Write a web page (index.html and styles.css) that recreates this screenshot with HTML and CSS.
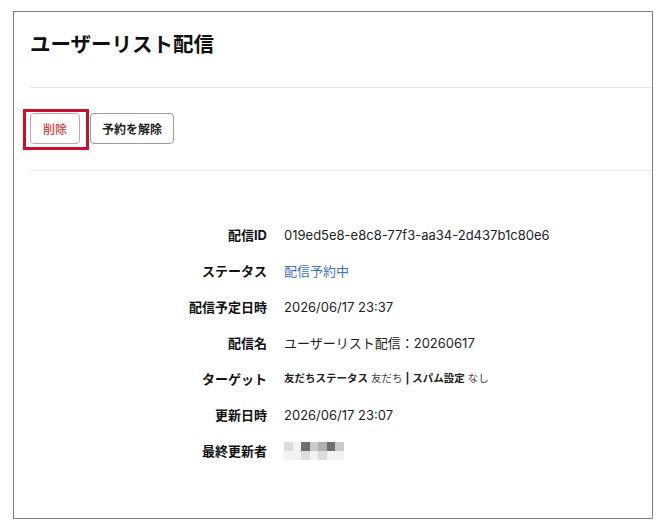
FILE: index.html
```html
<!DOCTYPE html>
<html lang="ja">
<head>
    <meta charset="UTF-8">
    <meta name="viewport" content="width=device-width, initial-scale=1.0">
    <title>ユーザーリスト配信</title>
    <link rel="stylesheet" href="styles.css">
</head>
<body>
    <div class="page">
        <header class="page-header">
            <h1>ユーザーリスト配信</h1>
        </header>
        <div class="divider"></div>

        <div class="actions">
            <span class="highlight">
                <button class="btn btn-danger">削除</button>
            </span>
            <button class="btn">予約を解除</button>
        </div>
        <div class="divider"></div>

        <dl class="details">
            <dt>配信ID</dt>
            <dd>019ed5e8-e8c8-77f3-aa34-2d437b1c80e6</dd>

            <dt>ステータス</dt>
            <dd class="status">配信予約中</dd>

            <dt>配信予定日時</dt>
            <dd>2026/06/17 23:37</dd>

            <dt>配信名</dt>
            <dd>ユーザーリスト配信：20260617</dd>

            <dt>ターゲット</dt>
            <dd class="target"><b>友だちステータス</b> 友だち <b>|</b> <b>スパム設定</b> なし</dd>

            <dt>更新日時</dt>
            <dd>2026/06/17 23:07</dd>

            <dt>最終更新者</dt>
            <dd class="user">
                <!-- name is blurred in the capture -->
                <span class="mosaic">
                    <span class="m1"></span><span class="m0"></span><span class="m4"></span><span class="m2"></span><span class="m3"></span><span class="m4"></span><span class="m2"></span>
                    <span class="m0"></span><span class="m0"></span><span class="m1"></span><span class="m0"></span><span class="m1"></span><span class="m0"></span><span class="m0"></span>
                </span>
            </dd>
        </dl>
    </div>
</body>
</html>
```

FILE: styles.css
```css
body {
    margin: 0;
    background-color: #FFFFFF;
    color: #222222;
    font-family: Inter, "Noto Sans CJK JP", sans-serif;
}

.page {
    margin: 11px 0 0 13px;
    width: 638px;
    height: 506px;
    border: 1px solid #808080;
}

.page-header {
    padding: 19px 16px 28px;
}

.page-header h1 {
    margin: 0;
    font-size: 20.5px;
    line-height: 28px;
    font-weight: 700;
    color: #111111;
}

.divider {
    height: 1px;
    margin-left: 16px;
    background-color: #E6E6E6;
}

.actions {
    display: flex;
    gap: 10px;
    padding: 25px 16px 26px;
}

.btn {
    height: 31px;
    padding: 0 11px;
    border: 1px solid #9A9A9A;
    border-radius: 4px;
    background-color: #FFFFFF;
    color: #222222;
    font-family: inherit;
    font-size: 12px;
    font-weight: 700;
    cursor: pointer;
}

.btn-danger {
    padding: 0 12px;
    border-color: #C9A3A3;
    color: #D2423F;
    font-weight: 500;
}

/* red annotation box round the delete button */
.highlight {
    position: relative;
    display: inline-flex;
}

.highlight::after {
    content: "";
    position: absolute;
    top: -4px;
    left: -7px;
    right: -9px;
    bottom: -6px;
    border: 3px solid #C8102E;
    pointer-events: none;
}

.details {
    display: grid;
    grid-template-columns: 253px 1fr;
    column-gap: 17px;
    row-gap: 16px;
    margin: 0;
    padding-top: 54px;
    font-size: 13px;
    line-height: 20px;
}

.details dt {
    text-align: right;
    font-weight: 700;
    color: #111111;
}

.details dd {
    margin: 0;
}

.status {
    color: #3B73C6;
}

.details .target {
    font-size: 10.5px;
    color: #444444;
}

.target b {
    color: #222222;
}

.details .user {
    display: flex;
    align-items: center;
}

.mosaic {
    display: grid;
    grid-template-columns: repeat(7, 8.5px);
    grid-auto-rows: 9px;
}

.m0 { background-color: #F2F2F2; }
.m1 { background-color: #DCDCDC; }
.m2 { background-color: #CACACA; }
.m3 { background-color: #B0B0B0; }
.m4 { background-color: #6E6E6E; }
```
